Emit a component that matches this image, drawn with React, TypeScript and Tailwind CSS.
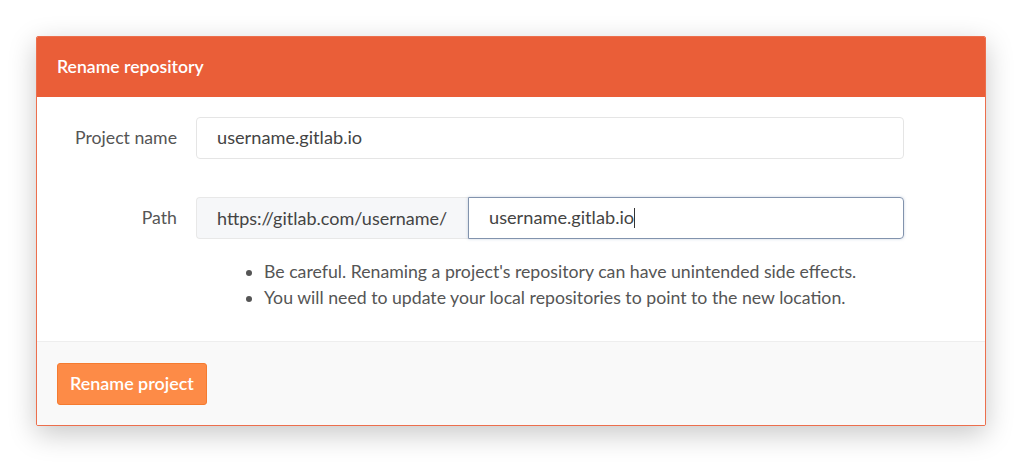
import React from "react";

export default function App() {
  return (
    <div
      className="w-[1032px] h-[472px] bg-white pt-[36px] pl-[36px]"
      style={{ fontFamily: "Lato, 'Open Sans', sans-serif" }}
    >
      <div className="w-[950px] h-[390px] border border-[#ec6f4d] rounded-[2px] bg-white shadow-[0_8px_28px_rgba(0,0,0,0.22)] flex flex-col overflow-hidden">
        <div className="h-[60px] bg-[#ea5e38] flex items-center pl-[20px] text-white text-[17.6px] font-semibold">
          Rename repository
        </div>
        <div className="flex-1 pt-[20px] pl-[20px] text-[#555] text-[17.7px]">
          <div className="flex items-center h-[42px]">
            <div className="w-[120px] text-right">Project name</div>
            <div className="ml-[19px] w-[708px] h-[42px] border border-[#e5e5e5] rounded-[4px] flex items-center pl-[20px] text-[#444] text-[18.2px]">
              username.gitlab.io
            </div>
          </div>
          <div className="flex items-center h-[42px] mt-[38px]">
            <div className="w-[120px] text-right">Path</div>
            <div className="ml-[19px] w-[272px] h-[42px] bg-[#f6f7f9] border border-[#e8e8e8] border-r-0 rounded-l-[4px] flex items-center pl-[20px] text-[#444] text-[18px]">
              https://gitlab.com/username/
            </div>
            <div className="w-[436px] h-[42px] border border-[#8293ad] rounded-r-[4px] flex items-center pl-[20px] text-[#444] text-[18.2px] shadow-[0_0_3px_rgba(100,130,170,0.35)]">
              <span>username.gitlab.io</span>
              <span className="inline-block w-[1px] h-[20px] bg-[#333]"></span>
            </div>
          </div>
          <ul className="ml-[207px] mt-[20px] list-disc text-[17.7px] leading-[26px] text-[#555]">
            <li>Be careful. Renaming a project's repository can have unintended side effects.</li>
            <li>You will need to update your local repositories to point to the new location.</li>
          </ul>
        </div>
        <div className="h-[84px] bg-[#f9f9f9] border-t border-[#eeeeee] flex items-center pl-[20px]">
          <button className="h-[42px] px-[12px] bg-[#fd8b47] border border-[#f57b30] rounded-[3px] text-white text-[17.9px] font-semibold">
            Rename project
          </button>
        </div>
      </div>
    </div>
  );
}
